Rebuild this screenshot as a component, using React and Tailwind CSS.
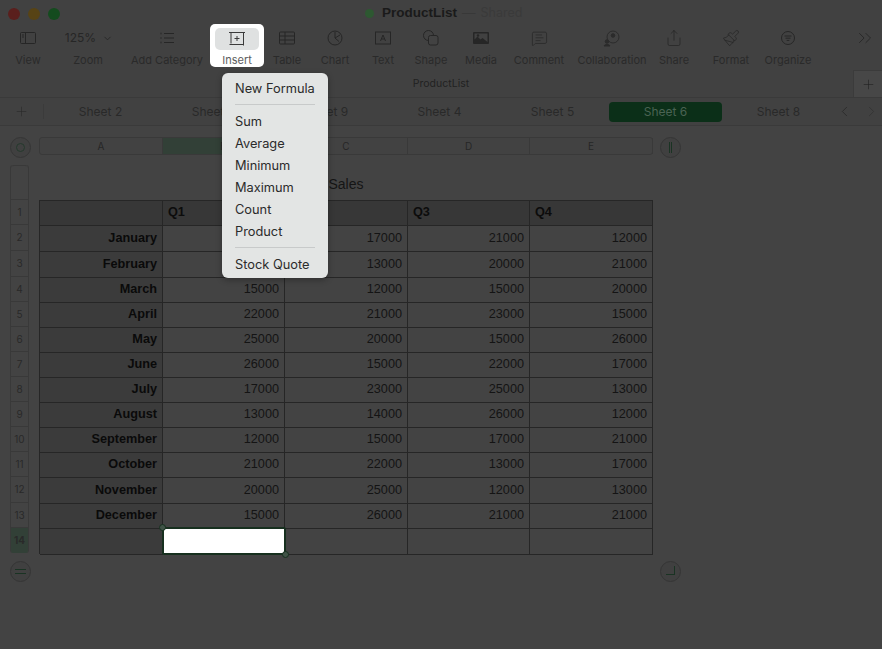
import { ChevronDown, MessageSquareText, Share, Paintbrush, ChevronsRight, ChevronLeft, ChevronRight, Plus } from 'lucide-react';

const tools = [
    { label: 'Zoom', w: 'w-[64px]', zoom: true },
    { label: 'Add Category', w: 'w-[94px]', icon: <ListIcon /> },
    { label: 'Insert', w: 'w-[46px]', active: true },
    { label: 'Table', w: 'w-[54px]', icon: <TableIcon /> },
    { label: 'Chart', w: 'w-[42px]', icon: <ChartIcon /> },
    { label: 'Text', w: 'w-[54px]', icon: <TextIcon /> },
    { label: 'Shape', w: 'w-[42px]', icon: <ShapeIcon /> },
    { label: 'Media', w: 'w-[58px]', icon: <MediaIcon /> },
    { label: 'Comment', w: 'w-[58px]', icon: <MessageSquareText size={17} strokeWidth={1} /> },
    { label: 'Collaboration', w: 'w-[88px]', icon: <CollabIcon /> },
    { label: 'Share', w: 'w-[36px]', icon: <Share size={18} strokeWidth={1} /> },
    { label: 'Format', w: 'w-[78px]', icon: <Paintbrush size={18} strokeWidth={1} /> },
    { label: 'Organize', w: 'w-[36px]', icon: <OrganizeIcon /> },
];

const sheets = ['Sheet 2', 'Sheet 3', 'Sheet 9', 'Sheet 4', 'Sheet 5', 'Sheet 6', 'Sheet 8'];

const columns = ['A', 'B', 'C', 'D', 'E'];

// the Q1 values of January and February sit behind the open menu
const rows = [
    ['January', '', '17000', '21000', '12000'],
    ['February', '', '13000', '20000', '21000'],
    ['March', '15000', '12000', '15000', '20000'],
    ['April', '22000', '21000', '23000', '15000'],
    ['May', '25000', '20000', '15000', '26000'],
    ['June', '26000', '15000', '22000', '17000'],
    ['July', '17000', '23000', '25000', '13000'],
    ['August', '13000', '14000', '26000', '12000'],
    ['September', '12000', '15000', '17000', '21000'],
    ['October', '21000', '22000', '13000', '17000'],
    ['November', '20000', '25000', '12000', '13000'],
    ['December', '15000', '26000', '21000', '21000'],
];

const rowHeights = ['h-[26px]', 'h-[26px]', 'h-[25px]', 'h-[25px]', 'h-[25px]', 'h-[25px]', 'h-[25px]', 'h-[25px]', 'h-[25px]', 'h-[25px]', 'h-[26px]', 'h-[25px]'];

function ViewIcon() {
    return (
        <svg width="18" height="18" viewBox="0 0 18 18" fill="none" stroke="currentColor" strokeWidth="1">
            <rect x="1.5" y="3.5" width="15" height="11" rx="1" />
            <path d="M6.5 3.5v11" />
            <path d="M3 6h2M3 8h2" />
        </svg>
    );
}

function ListIcon() {
    return (
        <svg width="18" height="18" viewBox="0 0 18 18" fill="none" stroke="currentColor" strokeWidth="1">
            <path d="M6 4.5h10M6 9h10M6 13.5h10" />
            <path d="M2.5 4.5h1M2.5 9h1M2.5 13.5h1" strokeWidth="1.6" />
        </svg>
    );
}

function TableIcon() {
    return (
        <svg width="18" height="18" viewBox="0 0 18 18" fill="none" stroke="currentColor" strokeWidth="1">
            <rect x="1.5" y="3" width="15" height="12" rx="1" />
            <path d="M1.5 7h15M1.5 11h15M7 3v12" />
        </svg>
    );
}

function ChartIcon() {
    return (
        <svg width="18" height="18" viewBox="0 0 18 18" fill="none" stroke="currentColor" strokeWidth="1">
            <circle cx="9" cy="9" r="7" />
            <path d="M9 3v6l4 3.5M9 9l5-3" />
        </svg>
    );
}

function TextIcon() {
    return (
        <svg width="18" height="18" viewBox="0 0 18 18" fill="none" stroke="currentColor" strokeWidth="1">
            <rect x="1.5" y="3" width="15" height="12" />
            <path d="M6.5 12 9 6l2.5 6M7.5 10h3" />
        </svg>
    );
}

function ShapeIcon() {
    return (
        <svg width="18" height="18" viewBox="0 0 18 18" fill="none" stroke="currentColor" strokeWidth="1">
            <circle cx="6.5" cy="6.5" r="5" />
            <rect x="6.5" y="6.5" width="9.5" height="9.5" rx="2" fill="#424242" />
        </svg>
    );
}

function MediaIcon() {
    return (
        <svg width="18" height="18" viewBox="0 0 18 18" fill="currentColor">
            <path fillRule="evenodd" d="M2 3h14a1 1 0 0 1 1 1v10a1 1 0 0 1-1 1H2a1 1 0 0 1-1-1V4a1 1 0 0 1 1-1zm.5 1.5v6l3-3 3 3 2-1.5 5 4V4.5z" />
            <circle cx="6" cy="6.5" r="1.2" />
        </svg>
    );
}

function CollabIcon() {
    return (
        <svg width="20" height="18" viewBox="0 0 20 18" fill="none" stroke="#2b2b2b" strokeWidth="1">
            <circle cx="11" cy="8" r="6" />
            <circle cx="11" cy="6.5" r="1.8" fill="#2b2b2b" />
            <circle cx="5" cy="12.5" r="1.8" fill="#2b2b2b" />
            <path d="M2 17c.5-2 5.5-2 6 0z" fill="#2b2b2b" />
        </svg>
    );
}

function OrganizeIcon() {
    return (
        <svg width="18" height="18" viewBox="0 0 18 18" fill="none" stroke="currentColor" strokeWidth="1">
            <circle cx="9" cy="9" r="6.5" />
            <path d="M5.5 7h7M6.5 9.2h5M7.7 11.4h2.6" />
        </svg>
    );
}

function InsertIcon() {
    return (
        <svg width="18" height="18" viewBox="0 0 18 18" fill="none" stroke="#3a3a3a" strokeWidth="1">
            <path d="M1 2.5h16M3 2.5v11M15.5 2.5v13M1.5 14.5H15" />
            <path d="M9 6v5M6.5 8.5h5" />
        </svg>
    );
}

function Toolbar() {
    return (
        <div className="flex h-[46px] text-[#262626]">
            <ToolItem label="View" w="w-[56px]" icon={<ViewIcon />} />
            {tools.map((t) => t.zoom ? (
                <ToolItem key={t.label} label={t.label} w={t.w} icon={
                    <span className="flex items-center gap-[6px] pl-[2px] text-[12px]">125% <ChevronDown size={11} strokeWidth={2} /></span>
                } />
            ) : t.active ? (
                <div key={t.label} className={`${t.w} relative flex flex-col items-center`}>
                    <div className="absolute -left-[4px] -right-[4px] top-0 bottom-[3px] flex flex-col items-center rounded-[5px] bg-white pt-[4px]">
                        <div className="flex h-[22px] w-[44px] items-center justify-center rounded-[5px] bg-[#dfe1e1]"><InsertIcon /></div>
                        <span className="mt-[4px] text-[11px] leading-[13px] text-[#5d5d5d]">Insert</span>
                    </div>
                </div>
            ) : (
                <ToolItem key={t.label} label={t.label} w={t.w} icon={t.icon} />
            ))}
            <div className="ml-auto flex w-[28px] items-start pt-[3px]">
                <ChevronsRight size={22} strokeWidth={1} />
            </div>
        </div>
    );
}

function ToolItem({ label, w, icon }) {
    return (
        <div className={`${w} flex shrink-0 flex-col items-center`}>
            <div className="flex h-[28px] items-center justify-center">{icon}</div>
            <span className="mt-[2px] whitespace-nowrap text-[11px] leading-[13px] text-[#2a2a2a]">{label}</span>
        </div>
    );
}

function Tabs() {
    return (
        <div className="flex h-[28px] items-center border-b border-[#3a3a3a] bg-[#414141] text-[#292929]">
            <div className="flex w-[44px] shrink-0 justify-center border-r border-[#3b3b3b]"><Plus size={15} strokeWidth={1} /></div>
            {sheets.map((s) => s === 'Sheet 6' ? (
                <div key={s} className="flex h-[20px] w-[113px] shrink-0 items-center justify-center rounded-[4px] bg-[#0b2f18] text-[12px] text-[#4a6353]">{s}</div>
            ) : (
                <div key={s} className="flex h-[20px] w-[113px] shrink-0 items-center justify-center text-[12px]">{s}</div>
            ))}
            <div className="ml-auto flex w-[46px] shrink-0 items-center justify-between pr-[2px]">
                <ChevronLeft size={17} strokeWidth={1.2} />
                <ChevronRight size={17} strokeWidth={1.2} className="text-[#333333]" />
            </div>
        </div>
    );
}

function Circle({ children }) {
    return (
        <div className="flex h-[21px] w-[21px] items-center justify-center rounded-full border border-[#353535] bg-[#404040]">{children}</div>
    );
}

function Menu() {
    const items = ['Sum', 'Average', 'Minimum', 'Maximum', 'Count', 'Product'];
    const row = 'flex h-[22px] items-center whitespace-nowrap px-[13px] text-[12.8px] text-[#2b2b2b]';
    return (
        <div className="absolute left-[222px] top-[73px] z-20 w-[106px] rounded-[6px] bg-[#e3e5e4] pb-[2px] pt-[4px] shadow-[0_2px_6px_rgba(0,0,0,0.3)]">
            <div className="flex h-[23px] items-center whitespace-nowrap px-[13px] pt-[1px] text-[12.8px] text-[#2b2b2b]">New Formula</div>
            <div className="mx-[13px] mb-[5px] mt-[4px] h-px bg-[#c8caca]" />
            <div className="pt-[1px]">
                {items.map((i) => <div key={i} className={row}>{i}</div>)}
            </div>
            <div className="mx-[13px] mb-[5px] mt-[4px] h-px bg-[#c8caca]" />
            <div className="pt-[1px]">
                <div className={row}>Stock Quote</div>
            </div>
        </div>
    );
}

function Sheet() {
    const grid = 'grid grid-cols-[123px_122px_123px_122px_123px]';
    const line = 'border-b border-r border-[#262626]';
    return (
        <div className="grid grid-cols-[39px_614px_auto] pt-[11px]">
            {/* column headers */}
            <div className="flex items-center justify-end pr-[8px]">
                <Circle><div className="h-[9px] w-[9px] rounded-full border border-[#24392c]" /></Circle>
            </div>
            <div className={`${grid} h-[18px] rounded-[3px] border border-[#393939] bg-[#424242]`}>
                {columns.map((c) => (
                    <div key={c} className={`flex items-center justify-center border-r border-[#393939] text-[10px] text-[#262626] ${c === 'B' ? 'bg-[#324037]' : ''}`}>{c}</div>
                ))}
            </div>
            <div className="flex items-center pl-[7px]">
                <Circle><div className="h-[11px] w-[3px] border-x border-[#1a3323]" /></Circle>
            </div>

            {/* row headers */}
            <div className="ml-[10px] mt-[7px] flex w-[19px] flex-col self-start justify-self-start overflow-hidden rounded-[3px] border-x border-[#393939] text-[10px] text-[#292929]">
                <div className="h-[35px] rounded-t-[3px] border-b border-t border-[#393939]" />
                <div className="flex h-[25px] items-center justify-center border-b border-[#393939]">1</div>
                {rows.map((r, i) => (
                    <div key={r[0]} className={`flex ${rowHeights[i]} items-center justify-center border-b border-[#393939]`}>{i + 2}</div>
                ))}
                <div className="flex h-[25px] items-center justify-center bg-[#324037] font-bold">14</div>
            </div>

            {/* table */}
            <div className="mt-[7px] font-['Liberation_Sans',sans-serif] text-[12.7px] text-[#141414]">
                <div className="flex h-[35px] items-center justify-center pt-[3px] text-[14px] text-[#151515]">Sales</div>
                <div className="border-l border-t border-[#262626]">
                    <div className={`${grid} h-[25px] bg-[#373737] font-bold text-[#0c0c0c]`}>
                        {['', 'Q1', 'Q2', 'Q3', 'Q4'].map((h) => (
                            <div key={h} className={`flex items-center pl-[5px] ${line}`}>{h}</div>
                        ))}
                    </div>
                    {rows.map((r, i) => (
                        <div key={r[0]} className={`${grid} ${rowHeights[i]}`}>
                            {r.map((v, j) => j === 0 ? (
                                <div key={j} className={`flex items-center justify-end bg-[#3b3b3b] pr-[5px] font-bold text-[#0a0a0a] ${line}`}>{v}</div>
                            ) : (
                                <div key={j} className={`flex items-center justify-end pr-[5px] ${line}`}>{v}</div>
                            ))}
                        </div>
                    ))}
                    <div className={`${grid} h-[25px]`}>
                        <div className={`bg-[#3b3b3b] ${line}`} />
                        <div className="relative z-10 -ml-px -mt-[2px] h-[28px] w-[124px] rounded-[2px] border-2 border-[#17301f] bg-white">
                            <div className="absolute -left-[5px] -top-[5px] h-[7px] w-[7px] rounded-full border border-[#17301f] bg-[#405347]" />
                            <div className="absolute -bottom-[5px] -right-[5px] h-[7px] w-[7px] rounded-full border border-[#17301f] bg-[#405347]" />
                        </div>
                        <div className={line} />
                        <div className={line} />
                        <div className={line} />
                    </div>
                </div>
            </div>
            <div />

            {/* add row / column buttons */}
            <div className="mt-[7px] flex justify-end pr-[8px]">
                <Circle><div className="h-[5px] w-[11px] border-y border-[#1a3323]" /></Circle>
            </div>
            <div />
            <div className="mt-[7px] flex pl-[7px]">
                <Circle><div className="mb-[2px] h-[9px] w-[9px] border-b border-r border-[#1a3323]" /></Circle>
            </div>
        </div>
    );
}

export default function App() {
    return (
        <div className="relative h-[649px] w-[882px] overflow-hidden bg-[#434343] font-['Inter','Liberation_Sans',sans-serif]">
            <div className="bg-[#414141]">
                {/* title bar */}
                <div className="relative flex h-[24px] items-center pl-[8px]">
                    <div className="flex gap-[8px] pt-[3px]">
                        <span className="h-[12px] w-[12px] rounded-full bg-[#5a1f1d]" />
                        <span className="h-[12px] w-[12px] rounded-full bg-[#574315]" />
                        <span className="h-[12px] w-[12px] rounded-full bg-[#144b1e]" />
                    </div>
                    <div className="ml-[305px] flex items-center pt-[3px] text-[13.5px]">
                        <span className="h-[9px] w-[9px] rounded-full bg-[#2d5831]" />
                        <span className="ml-[8px] font-['Liberation_Sans',sans-serif] font-bold text-[#1a1a1a]">ProductList</span>
                        <span className="ml-[5px] text-[#383838]">—</span>
                        <span className="ml-[5px] text-[12.5px] text-[#3a3a3a]">Shared</span>
                    </div>
                </div>
                <Toolbar />
                {/* document name */}
                <div className="relative flex h-[28px] items-center justify-center border-b border-[#3a3a3a] text-[10.5px] text-[#222222]">
                    ProductList
                    <div className="absolute bottom-0 right-0 top-0 flex w-[29px] items-center justify-center border-l border-t border-[#3b3b3b] bg-[#474747]">
                        <Plus size={15} strokeWidth={1} />
                    </div>
                </div>
                <Tabs />
            </div>
            <Sheet />
            <Menu />
        </div>
    );
}
